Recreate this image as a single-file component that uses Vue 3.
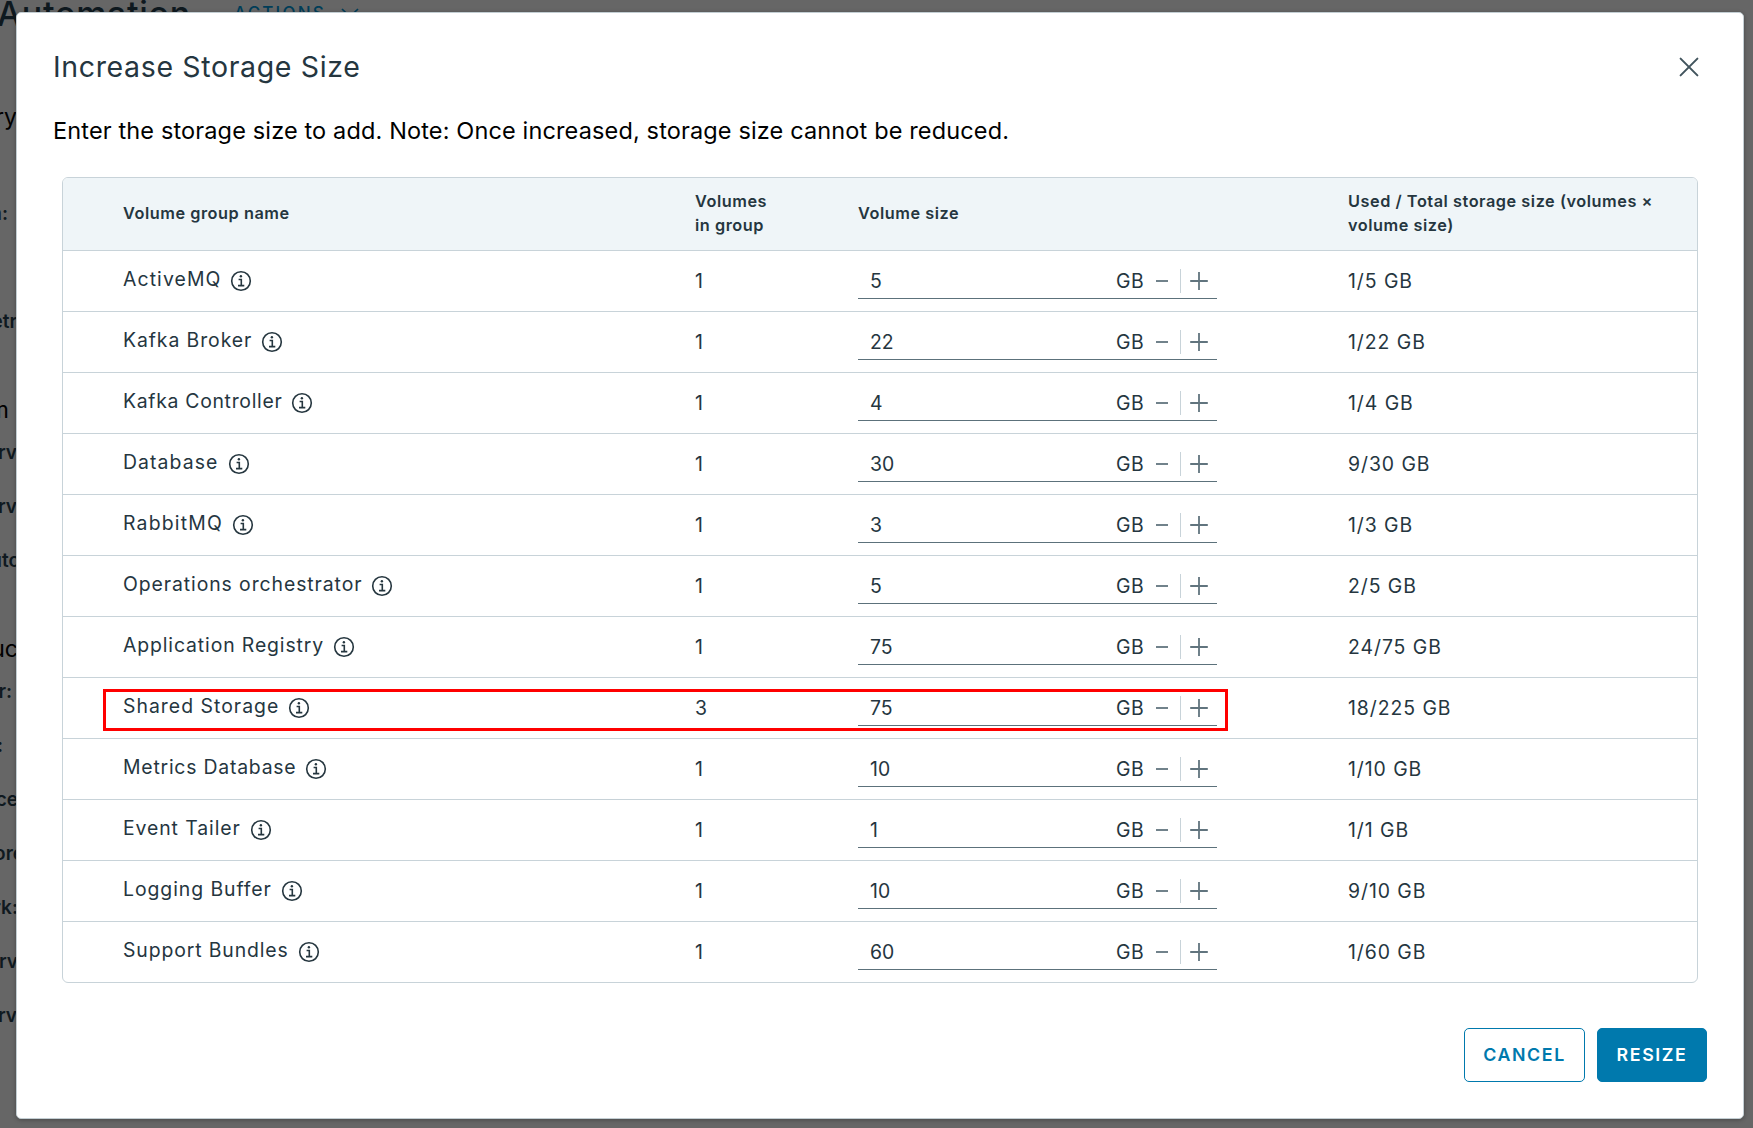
<script setup>
const details = [
  { heading: true, text: 'ry', edge: 17 },
  { text: '', edge: 0 },
  { text: 'n:', edge: 8 },
  { text: '', edge: 0 },
  { text: 'etr', edge: 17 },
  { heading: true, text: 'm', edge: 9 },
  { text: 'rv', edge: 17 },
  { text: 'rv', edge: 17 },
  { text: 'uto', edge: 20 },
  { heading: true, text: 'uc', edge: 18 },
  { text: 'r:', edge: 12 },
  { text: ':', edge: 3 },
  { text: 'ce', edge: 18 },
  { text: 'ore', edge: 24 },
  { text: 'rk:', edge: 18 },
  { text: 'rv', edge: 18 },
  { text: 'rv', edge: 17 },
]

const groups = [
  { name: 'ActiveMQ', tracking: 1.1, volumes: 1, size: 5, usage: '1/5 GB' },
  { name: 'Kafka Broker', tracking: 0.92, volumes: 1, size: 22, usage: '1/22 GB' },
  { name: 'Kafka Controller', tracking: 0.7, volumes: 1, size: 4, usage: '1/4 GB' },
  { name: 'Database', tracking: 1.1, volumes: 1, size: 30, usage: '9/30 GB' },
  { name: 'RabbitMQ', tracking: 1.2, volumes: 1, size: 3, usage: '1/3 GB' },
  { name: 'Operations orchestrator', tracking: 0.92, volumes: 1, size: 5, usage: '2/5 GB' },
  { name: 'Application Registry', tracking: 0.88, volumes: 1, size: 75, usage: '24/75 GB' },
  { name: 'Shared Storage', tracking: 1.02, volumes: 3, size: 75, usage: '18/225 GB', marked: true },
  { name: 'Metrics Database', tracking: 0.78, volumes: 1, size: 10, usage: '1/10 GB' },
  { name: 'Event Tailer', tracking: 0.92, volumes: 1, size: 1, usage: '1/1 GB' },
  { name: 'Logging Buffer', tracking: 0.94, volumes: 1, size: 10, usage: '9/10 GB' },
  { name: 'Support Bundles', tracking: 0.88, volumes: 1, size: 60, usage: '1/60 GB' },
]
</script>

<template>
  <div class="screen">
    <div class="page">
      <div class="page-head">
        <span class="page-title">Automation</span>
        <span class="actions">ACTIONS</span>
        <svg class="caret" width="18" height="10" viewBox="0 0 18 10">
          <path d="M1 1 L9 8.5 L17 1" fill="none" stroke="currentColor" stroke-width="1.7" />
        </svg>
      </div>
      <div class="details">
        <div
          v-for="(d, i) in details"
          :key="i"
          :class="['detail', { heading: d.heading }]"
          :style="{ width: d.edge + 'px' }"
        >{{ d.text }}</div>
      </div>
    </div>

    <div class="modal">
      <header class="modal-head">
        <h1>Increase Storage Size</h1>
        <svg class="close" width="20" height="20" viewBox="0 0 20 20">
          <path d="M1.6 1.6 L18.4 18.4 M18.4 1.6 L1.6 18.4" fill="none" stroke="#41545d" stroke-width="2" stroke-linecap="round" />
        </svg>
      </header>
      <p class="intro">Enter the storage size to add. Note: Once increased, storage size cannot be reduced.</p>

      <div class="grid">
        <div class="row head">
          <div class="name"><span>Volume group name</span></div>
          <div class="volumes">Volumes<br />in group</div>
          <div class="size">Volume size</div>
          <div class="usage">Used / Total storage size (volumes ×<br />volume size)</div>
        </div>
        <div v-for="g in groups" :key="g.name" class="row">
          <div class="name">
            <span :style="{ letterSpacing: g.tracking + 'px' }">{{ g.name }}</span>
            <svg class="info" width="22" height="22" viewBox="0 0 22 22">
              <circle cx="11" cy="11" r="9.3" fill="none" stroke="#25363f" stroke-width="1.6" />
              <circle cx="10.9" cy="6.3" r="1.2" fill="#25363f" />
              <path d="M8.6 9.5 H11.3 V15.6 M8 15.6 H14.3" fill="none" stroke="#25363f" stroke-width="1.6" />
            </svg>
          </div>
          <div class="volumes">{{ g.volumes }}</div>
          <div class="size">
            <div class="field">
              <span class="value">{{ g.size }}</span>
              <span class="unit">GB</span>
              <svg class="minus" width="12" height="20" viewBox="0 0 12 20">
                <path d="M0 10 H12" stroke="#61747e" stroke-width="1.8" />
              </svg>
              <i class="sep"></i>
              <svg class="plus" width="18" height="20" viewBox="0 0 18 20">
                <path d="M0.2 10 H17.8 M9 1 V19" stroke="#61747e" stroke-width="1.8" />
              </svg>
            </div>
          </div>
          <div class="usage">{{ g.usage }}</div>
          <div v-if="g.marked" class="mark"></div>
        </div>
      </div>

      <footer class="modal-foot">
        <button class="btn outline">CANCEL</button>
        <button class="btn solid">RESIZE</button>
      </footer>
    </div>
  </div>
</template>

<style>
body {
  margin: 0;
  overflow: hidden;
}
</style>

<style scoped>
.screen {
  position: relative;
  box-sizing: border-box;
  width: 1753px;
  height: 1128px;
  padding: 12px 9px 9px 16px;
  overflow: hidden;
  background: #666;
  font-family: 'Inter', 'Noto Sans', sans-serif;
  color: #25363f;
}

/* dimmed page behind the dialog */
.page {
  position: absolute;
  inset: 0;
  overflow: hidden;
  color: #0f191f;
}
.page-head {
  display: flex;
  height: 48px;
}
.page-title {
  width: 191px;
  margin-left: -3px;
  margin-top: -6px;
  font-size: 34px;
  line-height: 40px;
  font-weight: 500;
  letter-spacing: 0.7px;
}
.actions {
  margin-left: 46px;
  margin-top: 2px;
  font-size: 17px;
  line-height: 22px;
  font-weight: 500;
  letter-spacing: 2.2px;
  color: #003d58;
}
.caret {
  margin-left: 15px;
  margin-top: 8px;
  color: #003d58;
}
.details {
  margin-top: 8px;
}
.detail {
  display: flex;
  justify-content: flex-end;
  height: 54px;
  font-size: 19px;
  line-height: 54px;
  font-weight: 600;
}
.detail.heading {
  height: 77px;
  font-size: 23px;
  line-height: 122px;
  font-weight: 400;
  color: #000;
}

.modal {
  position: relative;
  display: flex;
  flex-direction: column;
  box-sizing: border-box;
  height: 1107px;
  padding: 0 36px;
  border: 1px solid #c3ced3;
  border-radius: 5px;
  background: #fff;
  box-shadow: 0 1px 4px rgba(0, 0, 0, 0.3);
}
.modal-head {
  display: flex;
  justify-content: space-between;
  align-items: center;
  height: 36px;
  margin-top: 36px;
}
h1 {
  margin: 0;
  font-size: 28.5px;
  line-height: 36px;
  font-weight: 400;
  letter-spacing: 0.64px;
}
.close {
  margin-right: 8px;
}
.intro {
  margin: 30px 0 0;
  font-size: 23.5px;
  line-height: 32px;
  font-weight: 400;
  letter-spacing: 0.14px;
  color: #000;
  white-space: nowrap;
}

.grid {
  box-sizing: border-box;
  width: 1636px;
  margin: 30px 0 0 9px;
  border: 1px solid #c8d3d9;
  border-radius: 6px;
  overflow: hidden;
}
.row {
  position: relative;
  display: flex;
  align-items: center;
  box-sizing: border-box;
  height: 61px;
  border-top: 1px solid #c8d3d9;
  font-size: 19.4px;
  font-weight: 400;
  line-height: 24px;
  white-space: nowrap;
}
.row.head {
  height: 72px;
  padding-bottom: 2px;
  border-top: 0;
  background: #eff5f8;
  font-size: 16.3px;
  font-weight: 600;
  letter-spacing: 0.54px;
}
.name {
  display: flex;
  align-items: center;
  width: 572px;
  padding-left: 60px;
}
.row:not(.head) .name span {
  padding-bottom: 4px;
}
.info {
  margin-left: 9px;
}
.volumes {
  width: 163px;
}
.size {
  width: 490px;
}
.field {
  display: flex;
  align-items: center;
  box-sizing: border-box;
  width: 359px;
  height: 36px;
  border-bottom: 1px solid #5c717b;
}
.value {
  width: 246px;
  padding-left: 12px;
}
.unit {
  width: 40px;
  letter-spacing: 0.5px;
}
.sep {
  width: 1px;
  height: 24px;
  margin: 0 9px 0 12px;
  background: #c8d3d9;
}
.row:not(.head) .usage {
  letter-spacing: 0.95px;
}
.mark {
  position: absolute;
  left: 40px;
  top: 11px;
  box-sizing: border-box;
  width: 1125px;
  height: 42px;
  border: 3px solid #f00;
}

.modal-foot {
  display: flex;
  justify-content: flex-end;
  gap: 12px;
  margin-top: 45px;
}
.btn {
  box-sizing: border-box;
  height: 54px;
  padding: 0 0 2px;
  border: 1px solid #0079ad;
  border-radius: 5px;
  font-family: inherit;
  font-size: 17.8px;
  font-weight: 600;
  letter-spacing: 1.6px;
}
.outline {
  width: 121px;
  background: #fff;
  color: #0079ad;
}
.solid {
  width: 110px;
  background: #0079ad;
  color: #fff;
}
</style>
